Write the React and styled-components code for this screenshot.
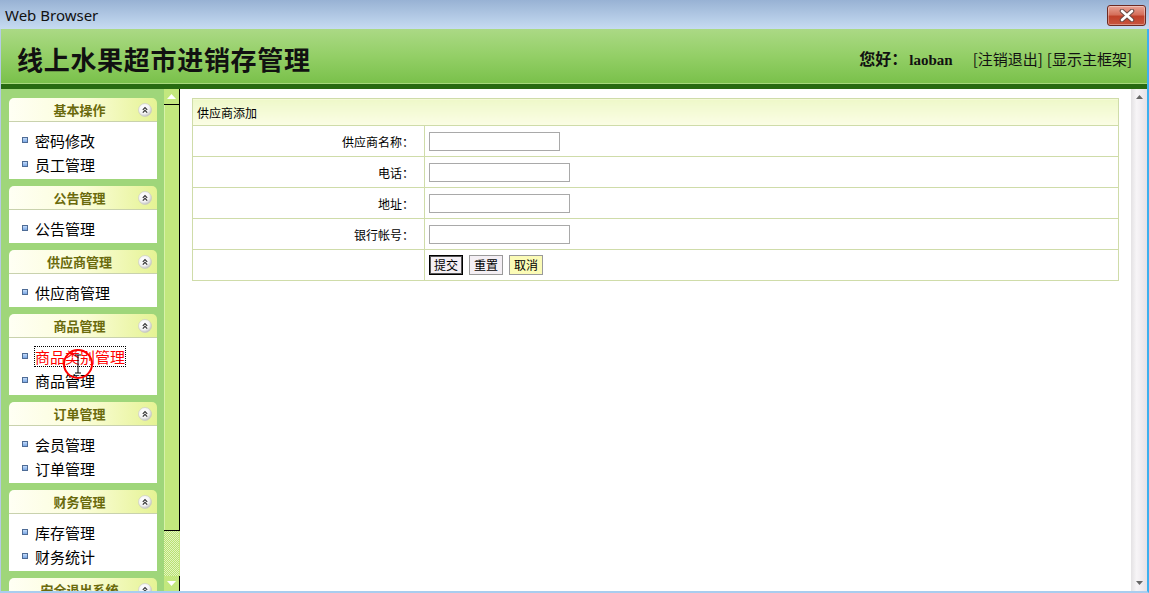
import styled, { createGlobalStyle } from "styled-components";

const GlobalStyle = createGlobalStyle`
  html, body {
    margin: 0;
    padding: 0;
    overflow: hidden;
    background: #fff;
  }
  body {
    font-family: "Noto Sans CJK SC", "Noto Sans", sans-serif;
    color: #000;
  }
`;

const Window = styled.div`
  position: relative;
  width: 1149px;
  height: 593px;
  display: flex;
  flex-direction: column;
  overflow: hidden;
`;

const TitleBar = styled.div`
  height: 29px;
  flex-shrink: 0;
  display: flex;
  align-items: center;
  justify-content: space-between;
  padding: 0 3px 0 5px;
  background: linear-gradient(#98b2d4, #b4cbe6 60%, #c6dbf1);
  font-family: "Noto Sans", sans-serif;
  font-size: 15px;
  color: #111;
`;

const CloseButton = styled.div`
  width: 39px;
  height: 21px;
  margin-top: 1px;
  box-sizing: border-box;
  border: 1px solid #6d2a22;
  border-radius: 3px;
  background: linear-gradient(#e9a395, #d5705c 45%, #c0412a 55%, #c8553e);
  display: flex;
  align-items: center;
  justify-content: center;
  box-shadow: inset 0 0 0 1px rgba(255, 255, 255, 0.35);
`;

const Frame = styled.div`
  flex: 1;
  min-height: 0;
  display: flex;
  flex-direction: column;
  border-left: 1px solid #b5cbe6;
  border-right: 2px solid #3eb0ef;
  border-bottom: 2px solid #a9cdef;
`;

const Header = styled.header`
  height: 60px;
  flex-shrink: 0;
  display: flex;
  align-items: center;
  justify-content: space-between;
  padding: 3px 15px 0 16px;
  box-sizing: border-box;
  background: linear-gradient(#abd985, #93cf66 50%, #79c04a);
  box-shadow: inset 0 -1px 0 #a8d97e;
  border-bottom: 5px solid #276a11;
`;

const SiteTitle = styled.h1`
  margin: 0;
  font-size: 26px;
  font-weight: 700;
  letter-spacing: 0.7px;
  color: #111;
`;

const UserBox = styled.div`
  display: flex;
  align-items: baseline;
  color: #111;
`;

const Hello = styled.span`
  font-size: 16px;
  font-weight: 700;
  margin-right: 20px;
`;

const UserName = styled.span`
  font-family: "Liberation Serif", serif;
  font-weight: 700;
  font-size: 15px;
  margin-left: 2px;
`;

const TopLink = styled.span`
  font-size: 15px;
  margin-left: ${({ $gap }) => $gap || 0}px;
`;

const Body = styled.div`
  flex: 1;
  min-height: 0;
  display: flex;
`;

const Sidebar = styled.nav`
  width: 163px;
  flex-shrink: 0;
  box-sizing: border-box;
  padding: 9px 7px 0 8px;
  background: #9fd67a;
  display: flex;
  flex-direction: column;
  gap: 7px;
  overflow: hidden;
`;

const Panel = styled.section`
  flex-shrink: 0;
`;

const PanelHead = styled.div`
  position: relative;
  height: 23px;
  border-bottom: 1px solid #c9d2ad;
  border-radius: 5px 5px 0 0;
  background: linear-gradient(to right, #fffff4, #fbfdd9 50%, #e5f394);
  display: flex;
  align-items: center;
  justify-content: center;
  padding-right: 7px;
  font-size: 13px;
  font-weight: 700;
  color: #6a6a0c;
`;

const Toggle = styled.svg`
  position: absolute;
  right: 5px;
  top: 5px;
`;

const PanelBody = styled.ul`
  list-style: none;
  margin: 0;
  padding: 6px 0 3px;
  background: #fff;
`;

const Item = styled.li`
  height: 24px;
  display: flex;
  align-items: center;
  gap: 7px;
  padding-left: 13px;
  font-size: 15px;
  color: ${({ $active }) => ($active ? "#f00" : "#000")};
`;

const Bullet = styled.span`
  width: 4px;
  height: 4px;
  border: 1px solid #4f6c96;
  background: linear-gradient(#c4dcfb, #7aa6e4);
  flex-shrink: 0;
`;

const ItemText = styled.span`
  line-height: 19px;
  outline: ${({ $active }) => ($active ? "1px dotted #000" : "none")};
  outline-offset: 0;
`;

const SideScroll = styled.div`
  width: 16px;
  flex-shrink: 0;
  display: flex;
  flex-direction: column;
  background: #c3e87e;
`;

const ScrollBtn = styled.div`
  height: 15px;
  flex-shrink: 0;
  display: flex;
  align-items: center;
  justify-content: center;
  border-right: 1px solid #000;
  border-bottom: ${({ $top }) => ($top ? "1px solid #000" : "none")};
  background: #c3e87e;
`;

const Thumb = styled.div`
  height: 425px;
  flex-shrink: 0;
  border-right: 1px solid #000;
  border-bottom: 1px solid #000;
  box-shadow: inset 1px 0 0 #d8f2a8;
  background: #c3e87e;
`;

const Track = styled.div`
  flex: 1;
  background: repeating-conic-gradient(#e2f5c0 0 25%, #b9e171 0 50%) 0 0 / 2px 2px;
  border-right: 1px solid #c3e87e;
`;

const Main = styled.main`
  flex: 1;
  min-width: 0;
  background: #fff;
  padding: 9px 12px 0;
  overflow: hidden;
`;

const FormTable = styled.table`
  width: 100%;
  border-collapse: collapse;
  border: 1px solid #cfdca9;
  font-size: 12px;
`;

const HeadCell = styled.th`
  height: 26px;
  padding: 0 0 0 4px;
  text-align: left;
  font-weight: 400;
  border: 1px solid #cfdca9;
  background: linear-gradient(#eef8c9, #fbfde5);
`;

const LabelCell = styled.td`
  width: 221px;
  height: 30px;
  padding: 0 10px 0 0;
  text-align: right;
  border: 1px solid #cfdca9;
`;

const FieldCell = styled.td`
  height: 30px;
  padding: 0 4px;
  border: 1px solid #cfdca9;
`;

const TextInput = styled.input`
  display: block;
  width: ${({ $w }) => $w}px;
  height: 19px;
  box-sizing: border-box;
  border: 1px solid #a9a9a9;
  padding: 0 2px;
  margin: 0;
  font-size: 12px;
  background: #fff;
`;

const Actions = styled.div`
  display: flex;
  gap: 6px;
`;

const Button = styled.button`
  height: 20px;
  padding: 0 4px;
  margin: 0;
  font-family: "Noto Sans CJK SC", sans-serif;
  font-size: 12px;
  line-height: 18px;
  color: #000;
  border: 1px solid ${({ $focus }) => ($focus ? "#000" : "#9a9a9a")};
  box-shadow: ${({ $focus }) => ($focus ? "inset 0 0 0 1px #555" : "none")};
  background: ${({ $tone }) => ($tone === "yellow" ? "#fbfbb6" : "#f4eff4")};
`;

const RightScroll = styled.div`
  width: 16px;
  flex-shrink: 0;
  display: flex;
  flex-direction: column;
  justify-content: space-between;
  align-items: center;
  padding: 6px 0 6px;
  box-sizing: border-box;
  background: linear-gradient(to right, #e4e2e4, #f7f5f7 35%, #efebef 70%, #e6e2e6);
`;

const ClickMark = styled.svg`
  position: absolute;
  left: 62px;
  top: 348px;
  pointer-events: none;
`;

const ToggleIcon = () => (
  <Toggle width="14" height="14" viewBox="0 0 14 14">
    <defs>
      <radialGradient id="tg" cx="40%" cy="35%" r="70%">
        <stop offset="0%" stopColor="#ffffff" />
        <stop offset="60%" stopColor="#f4f4f4" />
        <stop offset="100%" stopColor="#b9b9b9" />
      </radialGradient>
    </defs>
    <circle cx="7" cy="7" r="6.5" fill="url(#tg)" stroke="#c8c8c8" strokeWidth="0.6" />
    <polyline points="4.8,6.8 7,4.6 9.2,6.8" fill="none" stroke="#333" strokeWidth="1.2" />
    <polyline points="4.8,9.6 7,7.4 9.2,9.6" fill="none" stroke="#333" strokeWidth="1.2" />
  </Toggle>
);

const menu = [
  { title: "基本操作", items: ["密码修改", "员工管理"] },
  { title: "公告管理", items: ["公告管理"] },
  { title: "供应商管理", items: ["供应商管理"] },
  { title: "商品管理", items: ["商品类别管理", "商品管理"], active: 0 },
  { title: "订单管理", items: ["会员管理", "订单管理"] },
  { title: "财务管理", items: ["库存管理", "财务统计"] },
  { title: "安全退出系统", items: ["退出系统"] },
];

const fields = [
  { label: "供应商名称：", w: 131 },
  { label: "电话：", w: 141 },
  { label: "地址：", w: 141 },
  { label: "银行帐号：", w: 141 },
];

export default function App() {
  return (
    <>
      <GlobalStyle />
      <Window>
        <TitleBar>
          <span>Web Browser</span>
          <CloseButton>
            <svg width="16" height="13" viewBox="0 0 16 13">
              <path d="M3 2 L13 11 M13 2 L3 11" stroke="#6b4a44" strokeWidth="4.6" strokeLinecap="round" />
              <path d="M3 2 L13 11 M13 2 L3 11" stroke="#fff" strokeWidth="2.6" strokeLinecap="round" />
            </svg>
          </CloseButton>
        </TitleBar>
        <Frame>
          <Header>
            <SiteTitle>线上水果超市进销存管理</SiteTitle>
            <UserBox>
              <Hello>
                您好：<UserName>laoban</UserName>
              </Hello>
              <TopLink>[注销退出]</TopLink>
              <TopLink $gap={4}>[显示主框架]</TopLink>
            </UserBox>
          </Header>
          <Body>
            <Sidebar>
              {menu.map((group) => (
                <Panel key={group.title}>
                  <PanelHead>
                    {group.title}
                    <ToggleIcon />
                  </PanelHead>
                  <PanelBody>
                    {group.items.map((name, i) => (
                      <Item key={name} $active={group.active === i}>
                        <Bullet />
                        <ItemText $active={group.active === i}>{name}</ItemText>
                      </Item>
                    ))}
                  </PanelBody>
                </Panel>
              ))}
            </Sidebar>
            <SideScroll>
              <ScrollBtn $top>
                <svg width="9" height="5" viewBox="0 0 9 5">
                  <polygon points="0,5 4.5,0 9,5" fill="#fff" />
                </svg>
              </ScrollBtn>
              <Thumb />
              <Track />
              <ScrollBtn>
                <svg width="9" height="5" viewBox="0 0 9 5">
                  <polygon points="0,0 4.5,5 9,0" fill="#fff" />
                </svg>
              </ScrollBtn>
            </SideScroll>
            <Main>
              <FormTable>
                <tbody>
                  <tr>
                    <HeadCell colSpan={2}>供应商添加</HeadCell>
                  </tr>
                  {fields.map((f) => (
                    <tr key={f.label}>
                      <LabelCell>{f.label}</LabelCell>
                      <FieldCell>
                        <TextInput type="text" $w={f.w} />
                      </FieldCell>
                    </tr>
                  ))}
                  <tr>
                    <LabelCell />
                    <FieldCell>
                      <Actions>
                        <Button $focus>提交</Button>
                        <Button>重置</Button>
                        <Button $tone="yellow">取消</Button>
                      </Actions>
                    </FieldCell>
                  </tr>
                </tbody>
              </FormTable>
            </Main>
            <RightScroll>
              <svg width="7" height="4" viewBox="0 0 7 4">
                <polygon points="0,4 3.5,0 7,4" fill="#666" />
              </svg>
              <svg width="7" height="4" viewBox="0 0 7 4">
                <polygon points="0,0 3.5,4 7,0" fill="#666" />
              </svg>
            </RightScroll>
          </Body>
        </Frame>
        <ClickMark width="32" height="32" viewBox="0 0 32 32">
          <circle cx="16" cy="16" r="14" fill="none" stroke="#f00" strokeWidth="2" />
          <path d="M13 7 H19 M16 7 V25 M13 25 H19" stroke="#000" strokeWidth="1" fill="none" />
        </ClickMark>
      </Window>
    </>
  );
}
